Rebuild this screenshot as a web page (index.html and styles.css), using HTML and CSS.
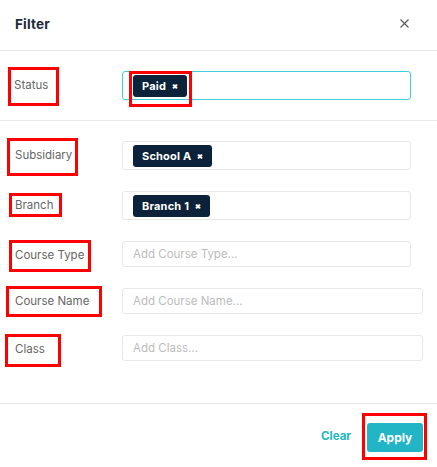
FILE: index.html
```html
<!DOCTYPE html>
<html lang="en">
  <head>
    <meta charset="UTF-8" />
    <title>Filter</title>
    <link rel="stylesheet" href="styles.css">
  </head>
  <body>
    <div class="modal">
      <div class="modal-header">
        <h2 class="modal-title">Filter</h2>
        <button class="close-btn" aria-label="Close">
          <svg width="9" height="9" viewBox="0 0 9 9"><path d="M0.5 0.5L8.5 8.5M8.5 0.5L0.5 8.5" stroke="#5b5b5b" stroke-width="1.2" fill="none"/></svg>
        </button>
      </div>

      <div class="section section-status">
        <div class="row">
          <span class="mark mark-status">Status</span>
          <div class="field field-active">
            <span class="mark mark-chip"><span class="chip">Paid <i class="chip-x">&#10006;</i></span></span>
          </div>
        </div>
      </div>

      <div class="section section-main">
        <div class="row">
          <span class="mark mark-subsidiary">Subsidiary</span>
          <div class="field">
            <span class="chip">School A <i class="chip-x">&#10006;</i></span>
          </div>
        </div>
        <div class="row">
          <span class="mark mark-branch">Branch</span>
          <div class="field">
            <span class="chip">Branch 1 <i class="chip-x">&#10006;</i></span>
          </div>
        </div>
        <div class="row">
          <span class="mark mark-type">Course Type</span>
          <input class="field field-text" type="text" placeholder="Add Course Type...">
        </div>
        <div class="row">
          <span class="mark mark-name">Course Name</span>
          <input class="field field-text field-wide" type="text" placeholder="Add Course Name...">
        </div>
        <div class="row">
          <span class="mark mark-class">Class</span>
          <input class="field field-text field-wide" type="text" placeholder="Add Class...">
        </div>
      </div>

      <div class="modal-footer">
        <button class="btn-clear">Clear</button>
        <span class="mark mark-apply"><button class="btn-apply">Apply</button></span>
      </div>
    </div>
  </body>
</html>
```

FILE: styles.css
```css
body {
  margin: 0;
  background: #fff;
  font-family: Inter, "Noto Sans", sans-serif;
}

.modal {
  width: 437px;
  height: 467px;
  overflow: hidden;
}

.modal-header {
  box-sizing: border-box;
  height: 51px;
  padding: 0 15px;
  display: flex;
  align-items: center;
  justify-content: space-between;
  border-bottom: 1px solid #e8e8e8;
}
.modal-title {
  margin: 0 0 2px 0;
  font-size: 13.5px;
  font-weight: 700;
  color: #1b2b3c;
  letter-spacing: 0.2px;
}
.close-btn {
  border: none;
  background: none;
  padding: 0;
  margin: 0 13px 3px 0;
  display: flex;
}

.section-status {
  padding: 20px 0 20px 0;
  border-bottom: 1px solid #e8e8e8;
}
.section-main {
  padding: 20px 0 42px 0;
  display: flex;
  flex-direction: column;
  gap: 21px;
  border-bottom: 1px solid #e8e8e8;
}

.row {
  display: grid;
  grid-template-columns: 122px 1fr;
  align-items: start;
  padding-right: 26px;
}

/* red annotation boxes */
.mark {
  box-sizing: border-box;
  border: 3px solid #f00;
}
.row > .mark {
  display: flex;
  align-items: center;
  font-size: 11.5px;
  color: #666;
  white-space: nowrap;
}
.mark-status {
  width: 51px;
  height: 39px;
  margin: -4px 0 -6px 8px;
  padding: 0 0 3px 3px;
}
.mark-subsidiary {
  width: 71px;
  height: 38px;
  margin: -3px 0 -6px 7px;
  padding: 0 0 4px 5px;
}
.mark-branch {
  width: 53px;
  height: 24px;
  margin: 2px 0 3px 9px;
  padding: 0 0 0 3px;
}
.mark-type {
  width: 82px;
  height: 32px;
  margin: -1px 0 -5px 9px;
  padding: 0 0 3px 3px;
}
.mark-name {
  width: 96px;
  height: 31px;
  margin: -2px 0 -3px 6px;
  padding: 0 0 1px 6px;
}
.mark-class {
  width: 56px;
  height: 33px;
  margin: -1px 0 -6px 5px;
  padding: 0 0 3px 7px;
}
.mark-chip {
  display: inline-flex;
  padding: 1px 2px 7px 1px;
  margin: -4px -5px -10px -4px;
}
.mark-apply {
  display: inline-flex;
  padding: 7px 1px 5px 2px;
}

.field {
  box-sizing: border-box;
  height: 29px;
  border: 1px solid #e8e8e8;
  border-radius: 3px;
  padding: 3px 10px;
  display: flex;
  align-items: flex-start;
  background: #fff;
}
.field-active {
  border-color: #3fd0df;
}
.field-text {
  height: 26px;
  width: 100%;
  font-family: inherit;
  font-size: 11.5px;
  color: #333;
  outline: none;
}
.field-text::placeholder {
  color: #bcbcbc;
}
.field-wide {
  width: calc(100% + 12px);
}

.chip {
  display: inline-flex;
  align-items: center;
  height: 22px;
  padding: 0 9px;
  border-radius: 3px;
  background: #0b223a;
  color: #fff;
  font-size: 11px;
  font-weight: 700;
  letter-spacing: 0.2px;
  white-space: pre;
}
.chip-x {
  font-style: normal;
  font-size: 7px;
  margin-left: 3px;
}

.modal-footer {
  display: flex;
  justify-content: flex-end;
  align-items: center;
  padding: 9px 10px 0 0;
}
.btn-clear {
  border: none;
  background: none;
  padding: 0;
  margin: 0 11px 1px 0;
  font-family: inherit;
  font-size: 11.5px;
  font-weight: 700;
  color: #22b5c6;
}
.btn-apply {
  width: 56px;
  height: 29px;
  border: none;
  border-radius: 3px;
  background: #22b5c6;
  color: #fff;
  font-family: inherit;
  font-size: 12px;
  font-weight: 700;
}
```
